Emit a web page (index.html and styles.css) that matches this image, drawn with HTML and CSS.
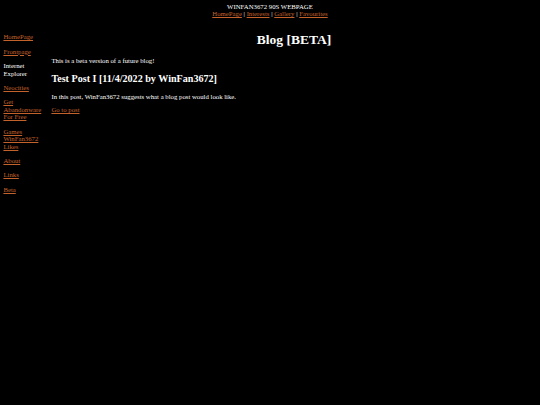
FILE: index.html
```html
<!DOCTYPE html>
<html>
<head>
<meta charset="utf-8">
<link rel="stylesheet" href="styles.css">
<title>Blog</title>
</head>
<body>
<header class="top">
  <div class="site-title">WINFAN3672 90S WEBPAGE</div>
  <nav class="top-nav"><a href="#">HomePage</a> | <a href="#">Interests</a> | <a href="#">Gallery</a> | <a href="#">Favourites</a></nav>
</header>
<div class="layout">
  <aside class="side">
    <p><a href="#">HomePage</a></p>
    <p><a href="#">Frontpage</a></p>
    <p>Internet Explorer</p>
    <p><a href="#">Neocities</a></p>
    <p><a href="#">Get Abandonware For Free</a></p>
    <p><a href="#">Games WinFan3672 Likes</a></p>
    <p><a href="#">About</a></p>
    <p><a href="#">Links</a></p>
    <p><a href="#">Beta</a></p>
  </aside>
  <main class="main">
    <h1>Blog [BETA]</h1>
    <p class="intro">This is a beta version of a future blog!</p>
    <h2>Test Post I [11/4/2022 by WinFan3672]</h2>
    <p class="summary">In this post, WinFan3672 suggests what a blog post would look like.</p>
    <p class="more"><a href="#">Go to post</a></p>
  </main>
</div>
</body>
</html>
```
FILE: styles.css
```css
html, body {
  background: #000;
}
body {
  margin: 2.8px 3.4px 3.4px;
  color: #fff;
  font-family: "Liberation Serif", "Times New Roman", serif;
  font-size: 6.75px;
  line-height: 7.6px;
}
a {
  color: #c4622c;
}
.top {
  text-align: center;
}
.layout {
  display: flex;
  margin-top: 8.7px;
  gap: 9px;
}
.side {
  width: 39px;
  flex: none;
}
.side p {
  margin: 6.7px 0 6.6px;
}
.main {
  flex: 1;
}
.main h1 {
  text-align: center;
  font-size: 13.5px;
  line-height: 15.5px;
  margin: 5.6px 0 9.4px;
}
.main h2 {
  font-size: 10.1px;
  line-height: 11.6px;
  margin: 8px 0 8.4px;
}
.main p {
  margin: 0;
}
.main .more {
  margin-top: 6.1px;
}
```
